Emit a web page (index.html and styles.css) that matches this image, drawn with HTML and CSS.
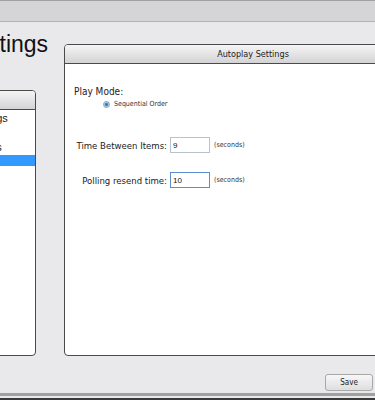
FILE: index.html
```html
<!DOCTYPE html>
<html lang="en">
<head>
    <meta charset="UTF-8">
    <title>Settings</title>
    <link rel="stylesheet" href="styles.css">
</head>
<body>
    <div class="window">
        <div class="titlebar"></div>

        <div class="main">
            <!-- left column: page title + category list -->
            <div class="side">
                <h1 class="page-title">Settings</h1>
                <div class="panel side-panel">
                    <div class="panel-head"></div>
                    <ul class="cat-list">
                        <li>Display Settings</li>
                        <li>Media Settings</li>
                        <li class="selected">Autoplay</li>
                    </ul>
                </div>
            </div>

            <!-- right panel -->
            <div class="panel content-panel">
                <div class="panel-head">Autoplay Settings</div>
                <div class="panel-body">
                    <div class="label">Play Mode:</div>
                    <div class="radio-row">
                        <span class="radio"></span>
                        <span class="small">Sequential Order</span>
                    </div>

                    <div class="field field-time">
                        <label for="time">Time Between Items:</label>
                        <input type="text" id="time" value="9">
                        <span class="small">(seconds)</span>
                    </div>

                    <div class="field field-poll">
                        <label for="poll">Polling resend time:</label>
                        <input type="text" id="poll" class="focused" value="10">
                        <span class="small">(seconds)</span>
                    </div>
                </div>
            </div>
        </div>

        <div class="footer">
            <button class="btn-save">Save</button>
        </div>
        <div class="statusbar"></div>
    </div>
</body>
</html>
```

FILE: styles.css
```css
* {
    margin: 0;
    padding: 0;
    box-sizing: border-box;
}

body {
    font-family: 'Liberation Sans Narrow', 'DejaVu Sans Condensed', sans-serif;
    background: #e9e9ec;
    color: #222;
    overflow: hidden;
}

.window {
    height: 400px;
    display: flex;
    flex-direction: column;
}

.titlebar {
    height: 22px;
    background: #d5d5d7;
    border-top: 1px solid #a0a0a2;
    border-bottom: 1px solid #b4b4b6;
}

.main {
    height: 334px;
    display: flex;
    align-items: flex-start;
    gap: 28px;
    margin-left: -120px;
}

/* left column */
.side {
    width: 156px;
    flex-shrink: 0;
    display: flex;
    flex-direction: column;
}

.page-title {
    font-family: 'Liberation Sans', sans-serif;
    font-weight: normal;
    font-size: 23px;
    line-height: 26px;
    color: #111;
    white-space: nowrap;
    padding-left: 85px;
    padding-top: 9px;
    height: 68px;
}

.panel {
    background: #fff;
    border: 1px solid #4a4a4a;
    border-radius: 4px;
    overflow: hidden;
}

.side-panel {
    height: 266px;
}

.panel-head {
    height: 19px;
    background: linear-gradient(#f5f5f5, #d3d3d5);
    border-bottom: 1px solid #4a4a4a;
    font-size: 9px;
    text-align: center;
    line-height: 18px;
    color: #222;
}

.cat-list {
    list-style: none;
    font-family: 'Liberation Sans', sans-serif;
    font-size: 11px;
}

.cat-list li {
    height: 16px;
    line-height: 16px;
    padding-left: 48px;
    white-space: nowrap;
}

.cat-list li:first-child {
    margin-bottom: 13px;
}

.cat-list li.selected {
    height: 11px;
    background: #3399ff;
    color: #3399ff;
    overflow: hidden;
}

/* right panel */
.content-panel {
    width: 378px;
    flex-shrink: 0;
    height: 312px;
    margin-top: 22px;
}

.panel-body {
    padding: 22px 0 0 9px;
}

.label {
    font-size: 10px;
    line-height: 12px;
}

.radio-row {
    display: flex;
    align-items: center;
    gap: 4px;
    padding-left: 29px;
    margin-top: 2px;
    height: 8px;
}

.radio {
    width: 7px;
    height: 7px;
    border-radius: 50%;
    border: 1px solid #8e9caa;
    background: radial-gradient(circle, #1f6fb0 0, #4b9bd6 1.5px, #e2e9ef 2.5px);
}

.small {
    font-size: 7px;
    color: #333;
}

.field {
    display: flex;
    align-items: center;
    gap: 3px;
}

.field label {
    font-size: 9.5px;
    text-align: right;
    width: 93px;
    white-space: nowrap;
}

.field-time {
    margin-top: 29px;
}

.field-poll {
    margin-top: 19px;
}

.field input {
    width: 40px;
    height: 16px;
    border: 1px solid #b8c2cc;
    font-family: 'Liberation Sans', sans-serif;
    font-size: 8px;
    padding-left: 2px;
    color: #111;
    margin-right: 1px;
}

.field input.focused {
    border-color: #5c8fcf;
}

.footer {
    height: 37px;
    display: flex;
    justify-content: flex-end;
    align-items: flex-end;
    padding: 0 2px 2px 0;
}

.btn-save {
    width: 48px;
    height: 17px;
    border: 1px solid #a8a8a8;
    border-radius: 3px;
    background: linear-gradient(#f7f7f7, #dedede);
    font-family: 'Liberation Sans Narrow', 'DejaVu Sans Condensed', sans-serif;
    font-size: 8px;
    color: #222;
}

.statusbar {
    height: 7px;
    background: #e9e9ec;
    border-top: 3px solid #a0a0a0;
    border-bottom: 2px solid #3a3a3a;
}
```
